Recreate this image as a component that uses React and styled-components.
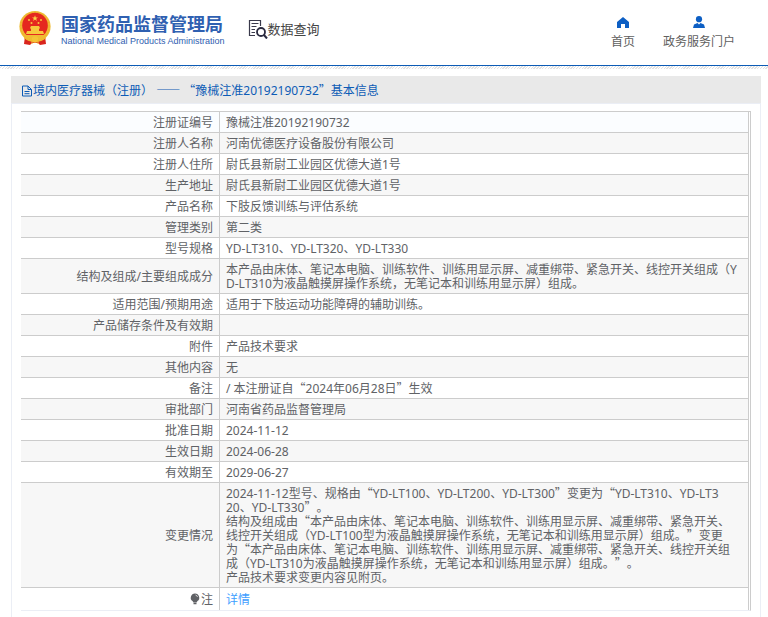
import React from 'react';
import styled, { createGlobalStyle } from 'styled-components';

const GlobalStyle = createGlobalStyle`
  * {
    box-sizing: border-box;
  }

  body {
    margin: 0;
    background: #fff;
    color: #606266;
    font-family: 'Noto Sans', 'Noto Sans CJK SC', sans-serif;
    font-size: 12px;
    line-height: 14px;
    text-spacing-trim: space-all;
  }

  a {
    text-decoration: none;
  }
`;

const Page = styled.div`
  display: flex;
  flex-direction: column;
  min-height: 100vh;
`;

const Header = styled.header`
  display: flex;
  align-items: flex-start;
  height: 66px;
  padding: 0 33px 0 18px;
  border-bottom: 1px solid #0d5cb6;
`;

const HatchStrip = styled.div`
  height: 3px;
  background: repeating-linear-gradient(135deg, #fff 0 1px, #e2e2e2 1px 2px);
`;

const Brand = styled.a`
  display: flex;
  gap: 9px;
  padding-top: 10px;
  color: #2f60b1;
`;

const BrandText = styled.span`
  display: flex;
  flex-direction: column;
  padding-top: 3px;
`;

const BrandName = styled.span`
  font-family: 'Noto Sans CJK SC', sans-serif;
  font-size: 18px;
  font-weight: 700;
  line-height: 21px;
  white-space: nowrap;
`;

const BrandSub = styled.span`
  font-family: 'Liberation Sans', sans-serif;
  font-size: 9px;
  line-height: 14px;
  white-space: nowrap;
`;

const Section = styled.div`
  display: flex;
  align-items: center;
  padding: 19px 0 0 23px;
  color: #444;
  font-size: 13px;
  line-height: 20px;
  white-space: nowrap;
`;

const Nav = styled.nav`
  display: flex;
  gap: 28px;
  margin-left: auto;
  padding-top: 16px;
`;

const NavLink = styled.a`
  display: flex;
  flex-direction: column;
  align-items: center;
  gap: 6px;
  color: #606060;
  white-space: nowrap;
`;

const Panel = styled.main`
  flex: 1;
  margin: 7px 7px 0 11px;
  border: 1px solid #ebeef5;
  border-width: 0 1px;
`;

const PanelHeader = styled.h1`
  display: flex;
  align-items: center;
  height: 28px;
  margin: 0 -1px;
  padding: 2px 10px 0;
  border-bottom: 1px solid #ebeef5;
  background: #e9e9e9;
  color: #0d5cb6;
  font-size: 12px;
  font-weight: 400;
`;

const TableFrame = styled.div`
  margin: 7px 9px 0;
  padding-right: 1px;
  border-top: 1px solid #ccc;
  border-right: 1px solid #ccc;
  border-bottom: 1px solid #ebeef5;
`;

const Table = styled.table`
  width: 100%;
  border-collapse: separate;
  border-spacing: 0;
  table-layout: fixed;
`;

const LabelCell = styled.th`
  width: 199px;
  height: 21px;
  padding: 4px 6px 2px;
  border-right: 1px solid #ccc;
  border-bottom: 1px solid #ccc;
  font-weight: 400;
  text-align: right;
`;

const ValueCell = styled.td`
  padding: 4px 6px 2px;
  border-right: 1px solid #ccc;
  border-bottom: 1px solid #ccc;
  white-space: pre-line;
  word-break: break-all;
`;

const Row = styled.tr`
  background: #fff;

  &:nth-child(even) {
    background: #f7f7f7;
  }

  &:first-child {
    background: #fbfdff;
  }

  &:last-child > * {
    padding: 5px 6px 3px;
    border-bottom: 0;
  }
`;

const DetailLink = styled.a`
  color: #409eff;
`;

// full-width quotes and dashes only come out right in the CJK face
const Wide = styled.span`
  font-family: 'Noto Sans CJK SC', sans-serif;
  line-height: 0;
`;

const Mixed = ({ text }) =>
  text
    .split(/([“”—]+)/)
    .map((part, index) =>
      index % 2 ? <Wide key={index}>{part}</Wide> : part,
    );

const STAR =
  'M0-3 .8-.9 3-.9 1.2.5 1.9 2.6 0 1.3-1.9 2.6-1.2.5-3-.9-.8-.9Z';

const Emblem = () => (
  <svg width="34" height="36" viewBox="0 0 34 36" aria-hidden="true">
    <path d="M7 26h20l1 8-6 1-2-2h-6l-2 2-6-1Z" fill="#d9251d" />
    <circle cx="17" cy="16.5" r="15.6" fill="#f0bb32" />
    <circle
      cx="17"
      cy="16.5"
      r="14.2"
      fill="none"
      stroke="#e9ab2b"
      strokeDasharray="1 2"
    />
    <circle cx="17" cy="15.5" r="12.8" fill="#e5281f" />
    <path d={STAR} transform="translate(17 8.3)" fill="#fbd648" />
    <g fill="#f7c93e">
      <circle cx="11" cy="10" r="1" />
      <circle cx="23" cy="10" r="1" />
      <circle cx="13.5" cy="13" r="1" />
      <circle cx="20.5" cy="13" r="1" />
      <path d="M12 18l1-2h8l1 2-1 1v2h4l1 3H8l1-3h4v-2Z" />
    </g>
    <path d="M7 25h20l-1 3q-4 2-6 1h-6q-3 1-6-1Z" fill="#f0bb32" />
    <circle cx="17" cy="29.5" r="3.2" fill="#f5c437" />
    <path
      d="M6 28q4 3 8 2v4M28 28q-4 3-8 2v4"
      fill="none"
      stroke="#f0bb32"
      strokeWidth="1"
    />
  </svg>
);

const SearchDocIcon = () => (
  <svg width="20" height="20" viewBox="0 0 20 20" fill="none" aria-hidden="true">
    <path d="M7 16.5H1.5V1.5h11V7" stroke="#39394b" strokeWidth="1.2" />
    <path
      d="M3.5 4.500h7M3.500 7.500h5M3.500 10.500h3.500M3.500 13.500h3.500"
      stroke="#39394b"
    />
    <circle cx="13" cy="13" r="4" stroke="#2b2b40" strokeWidth="1.8" />
    <path d="m16 16 3 3.500" stroke="#2b2b40" strokeWidth="2" />
  </svg>
);

const HomeIcon = () => (
  <svg width="14" height="13" viewBox="0 0 14 13" aria-hidden="true">
    <path d="M7 1 13 6v6H9V8H5v4H1V6Z" fill="#0d5fc4" />
  </svg>
);

const UserIcon = () => (
  <svg width="14" height="13" viewBox="0 0 14 13" aria-hidden="true">
    <circle cx="7" cy="3.2" r="3.1" fill="#0d5fc4" />
    <path d="M1 12 2 8.500 5.500 7 7 8.500 8.500 7 12 8.500 13 12Z" fill="#0d5fc4" />
  </svg>
);

const DocIcon = () => (
  <svg width="12" height="12" viewBox="0 0 12 12" fill="none" aria-hidden="true">
    <path
      d="M1.500 1h5.500l3.500 3.500V11h-9ZM7 1v3.500h3.500M3.500 6.500h5M3.500 8.700h5"
      stroke="#0d5cb6"
    />
  </svg>
);

const BulbIcon = styled(({ className }) => (
  <svg className={className} width="11" height="12" viewBox="0 0 11 12" aria-hidden="true">
    <path
      d="M5 .5a4.200 4.200 0 0 1 2.500 7.600L6.500 9.500h-3l-1-1.400A4.200 4.200 0 0 1 5 .5Z"
      fill="#606266"
    />
    <path d="M3.500 10.500h3" stroke="#606266" strokeWidth="1.5" />
    <path d="M5.500 2q1.700.4 2 2" stroke="#fff" strokeWidth=".7" fill="none" />
  </svg>
))`
  vertical-align: -1px;
`;

const records = [
  ['注册证编号', '豫械注准20192190732'],
  ['注册人名称', '河南优德医疗设备股份有限公司'],
  ['注册人住所', '尉氏县新尉工业园区优德大道1号'],
  ['生产地址', '尉氏县新尉工业园区优德大道1号'],
  ['产品名称', '下肢反馈训练与评估系统'],
  ['管理类别', '第二类'],
  ['型号规格', 'YD-LT310、YD-LT320、YD-LT330'],
  [
    '结构及组成/主要组成成分',
    '本产品由床体、笔记本电脑、训练软件、训练用显示屏、减重绑带、紧急开关、线控开关组成（Y\nD-LT310为液晶触摸屏操作系统，无笔记本和训练用显示屏）组成。',
  ],
  ['适用范围/预期用途', '适用于下肢运动功能障碍的辅助训练。'],
  ['产品储存条件及有效期', ''],
  ['附件', '产品技术要求'],
  ['其他内容', '无'],
  ['备注', '/ 本注册证自“2024年06月28日”生效'],
  ['审批部门', '河南省药品监督管理局'],
  ['批准日期', '2024-11-12'],
  ['生效日期', '2024-06-28'],
  ['有效期至', '2029-06-27'],
  [
    '变更情况',
    '2024-11-12型号、规格由“YD-LT100、YD-LT200、YD-LT300”变更为“YD-LT310、YD-LT3\n20、YD-LT330”。\n结构及组成由“本产品由床体、笔记本电脑、训练软件、训练用显示屏、减重绑带、紧急开关、\n线控开关组成（YD-LT100型为液晶触摸屏操作系统，无笔记本和训练用显示屏）组成。”变更\n为“本产品由床体、笔记本电脑、训练软件、训练用显示屏、减重绑带、紧急开关、线控开关组\n成（YD-LT310为液晶触摸屏操作系统，无笔记本和训练用显示屏）组成。”。\n产品技术要求变更内容见附页。',
  ],
];

const App = () => (
  <Page lang="zh-CN">
    <GlobalStyle />
    <Header>
      <Brand href="#">
        <Emblem />
        <BrandText>
          <BrandName>国家药品监督管理局</BrandName>
          <BrandSub>National Medical Products Administration</BrandSub>
        </BrandText>
      </Brand>
      <Section>
        <SearchDocIcon />
        数据查询
      </Section>
      <Nav>
        <NavLink href="#">
          <HomeIcon />
          首页
        </NavLink>
        <NavLink href="#">
          <UserIcon />
          政务服务门户
        </NavLink>
      </Nav>
    </Header>
    <HatchStrip />
    <Panel>
      <PanelHeader>
        <DocIcon />
        <span>
          <Mixed text="境内医疗器械（注册） —— “豫械注准20192190732”基本信息" />
        </span>
      </PanelHeader>
      <TableFrame>
        <Table>
          <tbody>
            {records.map(([label, value]) => (
              <Row key={label}>
                <LabelCell scope="row">{label}</LabelCell>
                <ValueCell>
                  <Mixed text={value} />
                </ValueCell>
              </Row>
            ))}
            <Row>
              <LabelCell scope="row">
                <BulbIcon />注
              </LabelCell>
              <ValueCell>
                <DetailLink href="#">详情</DetailLink>
              </ValueCell>
            </Row>
          </tbody>
        </Table>
      </TableFrame>
    </Panel>
  </Page>
);

export default App;
